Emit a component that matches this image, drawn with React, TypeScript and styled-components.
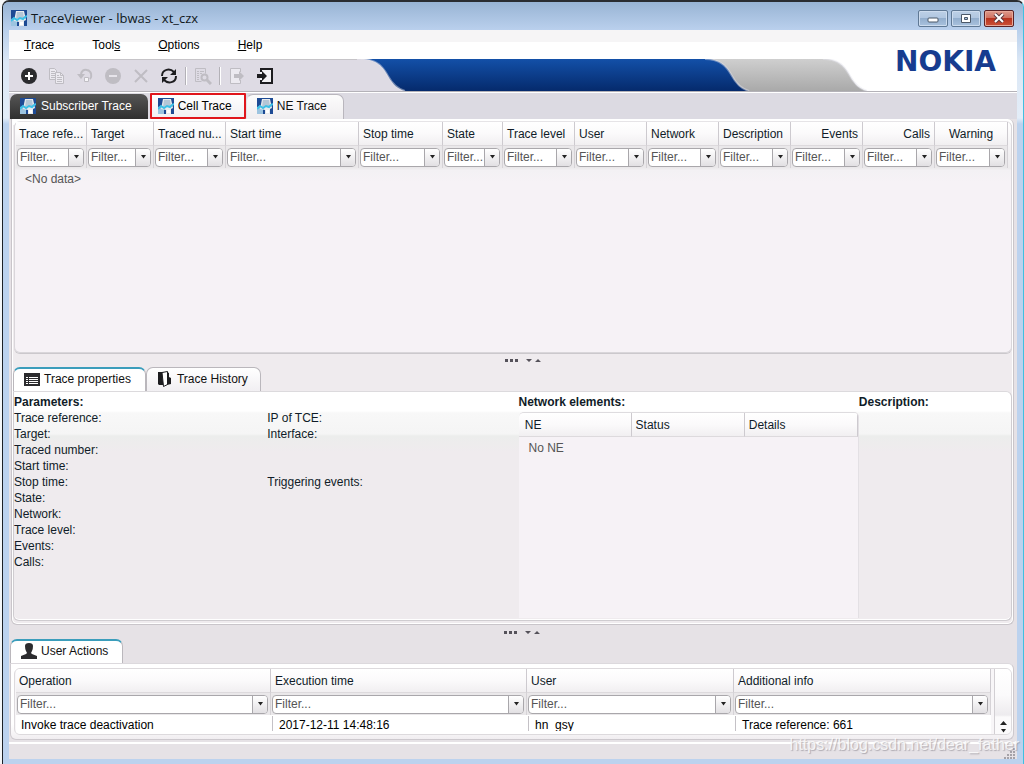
import React from "react";
import styled, { createGlobalStyle, css } from "styled-components";

const Global = createGlobalStyle`
  * { box-sizing: border-box; }
  html, body { margin: 0; padding: 0; }
  body { background: #f4f6f8; font: 12px/16px "Liberation Sans", Arial, sans-serif; color: #101c28; }
  button, input { font: inherit; color: inherit; margin: 0; }
  button { padding: 0; border: 0; background: none; }
  table { border-collapse: separate; border-spacing: 0; table-layout: fixed; width: 100%; }
  th, td { padding: 0; font-weight: normal; text-align: left; }
  svg { display: block; }
`;

const Desktop = styled.div`
  display: flex;
  min-height: 100vh;
  padding-left: 2px;
  background: #f4f6f8;
`;

const Window = styled.div`
  flex: 1;
  min-width: 0;
  position: relative;
  display: flex;
  flex-direction: column;
  padding: 0 6px 5px 6px;
  border-top: 2px solid #2a2d31;
  border-left: 1px solid #1c2026;
  border-right: 1px solid #3fc0e0;
  border-radius: 7px 7px 0 0;
  background: linear-gradient(#9cb7d6 0, #b9d0ec 28px, #dbe7f5 60px, #e3edf8 116px, #bcd2ee 122px, #bcd2ee 100%);
`;

const TitleBar = styled.header`
  height: 28px;
  display: flex;
  align-items: center;
  gap: 4px;
  margin: 0 -6px;
  padding: 4px 9px 0 8px;
  border-radius: 6px 6px 0 0;
  background: linear-gradient(#98b4d4, #bad0ed);
`;

const Title = styled.h1`
  flex: 1;
  margin: 0;
  font: 13px/16px "Open Sans", "Noto Sans", sans-serif;
  color: #101820;
`;

const CaptionButtons = styled.div`
  display: flex;
  gap: 3px;
`;

const CaptionButton = styled.button<{ $close?: boolean }>`
  width: 30px;
  height: 17px;
  display: grid;
  place-items: center;
  border: 1px solid ${(p) => (p.$close ? "#5a2226" : "#5f7894")};
  border-radius: 2px;
  box-shadow: inset 0 0 0 1px ${(p) => (p.$close ? "#e8a898" : "#cddcee")};
  background: ${(p) =>
    p.$close
      ? "linear-gradient(#dd9a8c 0, #d0705f 48%, #b8331f 50%, #cc5238 100%)"
      : "linear-gradient(#bdd0e6 0, #b0c6e0 48%, #93aecd 50%, #a9c2de 100%)"};
`;

const Client = styled.div`
  flex: 1;
  display: flex;
  flex-direction: column;
  position: relative;
  background: #e6e2e6;
`;

const MenuBar = styled.nav`
  height: 29px;
  display: flex;
  align-items: center;
  gap: 38px;
  padding-left: 15px;
  background: linear-gradient(#f6f5f6 0, #f6f5f6 12px, #fff 12px, #fff 100%);
  color: #000;
`;

const Logo = styled.div`
  position: absolute;
  top: 16px;
  right: 21px;
  font: bold 28px/32px "DejaVu Sans", sans-serif;
  color: #173c8f;
`;

const Band = styled.div`
  height: 34px;
  display: flex;
  border-bottom: 1px solid #fff;
  background: #fff;
  box-shadow: inset 0 -1px 0 #b4b2b8;
`;

const Toolbar = styled.div`
  width: 348px;
  height: 33px;
  display: flex;
  align-items: center;
  padding-left: 6px;
  border-top: 1px solid #c6c4c8;
  border-bottom: 1px solid #b4b2b8;
  background: #dedbe4;
`;

const ToolButton = styled.button`
  width: 28px;
  height: 28px;
  display: grid;
  place-items: center;
`;

const ToolRule = styled.i`
  width: 2px;
  height: 18px;
  margin: 0 2px;
  border-left: 1px solid #b3b1b7;
  border-right: 1px solid #fff;
`;

const BlueBand = styled.div`
  flex: 1;
  height: 32px;
  background: linear-gradient(#1350a8, #052a6c);
`;

const GreyBand = styled.div`
  width: 66px;
  height: 32px;
  background: linear-gradient(#cfcfcf, #a9a9a9);
`;

const BandEnd = styled.div`
  width: 146px;
`;

const TopTabs = styled.div`
  height: 26px;
  display: flex;
  align-items: flex-end;
  padding: 0 1px;
  gap: 2px;
  background: #dcdae2;
`;

const MainTab = styled.button<{ $look: "dark" | "marked" | "plain" }>`
  display: flex;
  align-items: center;
  gap: 5px;
  height: 25px;
  padding: 0 16px 2px 10px;
  color: #111;
  border-radius: 7px 7px 0 0;
  ${(p) =>
    p.$look === "dark" &&
    css`
      background: linear-gradient(#555, #303030);
      color: #fff;
    `}
  ${(p) =>
    p.$look === "marked" &&
    css`
      height: 26px;
      padding: 0 12px 0 6px;
      gap: 4px;
      border: 2px solid #e0161c;
      border-radius: 1px;
      background: linear-gradient(#fff, #f2f0f3);
      color: #000;
    `}
  ${(p) =>
    p.$look === "plain" &&
    css`
      margin-left: -2px;
      gap: 4px;
      border: 1px solid #b9b6bd;
      border-left-color: #e4e2e6;
      border-bottom: 0;
      background: linear-gradient(#fcfcfc, #efedf0);
    `}
`;

const OuterPanel = styled.main`
  flex: 1;
  display: flex;
  flex-direction: column;
  margin: 0 3px 0 2px;
  padding: 2px 1px 3px 1px;
  border: 1px solid #c9c5ca;
  border-top: 0;
  border-radius: 0 6px 6px 6px;
  background: linear-gradient(#fff 0, #fff 6px, #efebee 6px, #efebee 100%);
  box-shadow: inset 0 -1px 0 #fff, inset 1px 0 0 #fff, inset -1px 0 0 #fff;
`;

const TraceList = styled.section`
  flex: 1;
  min-height: 120px;
  margin-left: 1px;
  padding: 0 3px 0 1px;
  border: 1px solid #d9d6da;
  border-top-color: #e6e4e7;
  border-radius: 6px;
  background: linear-gradient(#fff 0, #f4f2f4 25px, #edebed 47px, #f3f1f4 48px, #f6f2f6 60px);
  box-shadow: 0 1px 0 #cbc8cc;
`;

const HeadCell = styled.th<{ $align?: string }>`
  height: 24px;
  padding: 0 4px;
  border-right: 1px solid #cdcacf;
  border-bottom: 1px solid #dddadd;
  background: linear-gradient(#fff 0, #fbfafb 50%, #f1eff1 100%);
  && { text-align: ${(p) => p.$align || "left"}; }
  white-space: nowrap;
  overflow: hidden;
  vertical-align: middle;
  &:first-child { padding-left: 3px; }
`;

const FilterCell = styled.td`
  height: 22px;
  padding: 0 2px 0 1px;
  border-right: 1px solid #d6d3d7;
  background: #eae8ea;
`;

const Combo = styled.div`
  display: flex;
  height: 19px;
  border: 1px solid #a9a7ab;
  border-radius: 4px;
  background: #fff;
  overflow: hidden;
`;

const ComboInput = styled.input`
  flex: 1;
  min-width: 0;
  width: 0;
  padding: 0 0 0 2px;
  border: 0;
  outline: 0;
  background: transparent;
  &::placeholder { color: #555; opacity: 1; }
`;

const ComboButton = styled.button`
  width: 15px;
  display: grid;
  place-items: center;
  border-left: 1px solid #a9a7ab;
  background: linear-gradient(#fff, #e2e0e3);
`;

const EmptyCell = styled.td<{ $indent: number }>`
  height: 21px;
  padding-left: ${(p) => p.$indent}px;
  color: #555;
`;

const Splitter = styled.div`
  height: 14px;
  display: flex;
  align-items: center;
  justify-content: center;
  padding-left: 20px;
`;

const SubTabs = styled.div`
  display: flex;
  align-items: flex-end;
`;

const SubTab = styled.button<{ $active?: boolean }>`
  display: flex;
  align-items: center;
  gap: 4px;
  height: 24px;
  padding: 0 12px 2px 10px;
  border: 1px solid #bab7bc;
  border-bottom: 0;
  border-radius: 7px 7px 0 0;
  background: linear-gradient(#fff, #f1eff2);
  color: #111;
  ${(p) =>
    p.$active &&
    css`
      padding-right: 14px;
      border-top: 2px solid #3b9dbb;
      background: #fff;
    `}
`;

const Properties = styled.section`
  display: grid;
  grid-template-columns: 253fr 251fr 340fr 152fr;
  min-height: 230px;
  border: 1px solid #cfccd0;
  border-top-color: #dcdadd;
  border-radius: 0 6px 6px 6px;
  background: linear-gradient(#fff 0, #fff 19px, #f8f8f8 21px, #f5f5f5 42px, #ecedec 44px, #efebee 60px);
  box-shadow: inset 0 -1px 0 #fff;
`;

const Column = styled.div<{ $top?: number }>`
  display: flex;
  flex-direction: column;
  padding-top: ${(p) => p.$top || 2}px;
`;

const Caption = styled.h2`
  margin: 0;
  font: bold 12px/16px "Liberation Sans", Arial, sans-serif;
`;

const Field = styled.div<{ $gap?: boolean }>`
  height: 16px;
  margin-top: ${(p) => (p.$gap ? 32 : 0)}px;
`;

const Elements = styled.div`
  flex: 1;
  margin: 2px 0 2px 0;
  border-right: 1px solid #e3e0e4;
  border-top: 1px solid #dedcdf;
  border-radius: 5px 5px 0 0;
  background: #f6f2f6;
  overflow: hidden;
`;

const Bottom = styled.section`
  padding: 0 3px 0 1px;
`;

const BottomPanel = styled.div`
  height: 77px;
  padding: 4px 1px 4px 3px;
  border: 1px solid #cdc9ce;
  border-top-color: #dcd9dd;
  border-radius: 0 6px 6px 6px;
  background: linear-gradient(#fff 0, #fff 60px, #f1eef1 100%);
`;

const ScrollArea = styled.div`
  display: flex;
  gap: 3px;
  height: 67px;
  border: 1px solid #dddadd;
  border-radius: 6px;
  overflow: hidden;
  background: #f8f6f8;
`;

const ScrollTable = styled.div`
  flex: 1;
  padding-left: 1px;
`;

const DataCell = styled.td`
  background: #fff;
  color: #000;
  padding: 1px 0 4px 1px;
  &:first-child > div { border-left-color: transparent; padding-left: 3px; }
`;

const Clip = styled.div`
  height: 15px;
  padding-left: 6px;
  border-left: 1px solid #c4c1c6;
  overflow: hidden;
  white-space: nowrap;
  line-height: 19px;
`;

const ScrollBar = styled.div`
  width: 17px;
  display: flex;
  flex-direction: column;
  border-left: 1px solid #d2cfd3;
  background: linear-gradient(#fff 0, #fbfafb 26px, #edebee 46px, #fbfafb 48px);
`;

const ScrollButton = styled.button<{ $top: number }>`
  height: 8px;
  margin-top: ${(p) => p.$top}px;
  display: grid;
  place-items: center;
`;

const StatusBar = styled.footer`
  height: 17px;
  margin-top: 2px;
  display: flex;
  align-items: flex-end;
  justify-content: flex-end;
  border-top: 2px solid #fff;
  background: #e6e2e6;
`;

const Watermark = styled.div`
  position: absolute;
  right: 4px;
  bottom: 10px;
  font: 16px/18px "Liberation Sans", Arial, sans-serif;
  color: rgba(255, 255, 255, 0.8);
  text-shadow: 1px 1px 1px rgba(120, 116, 125, 0.5);
  pointer-events: none;
`;

const AppIcon = () => (
  <svg width="16" height="16" viewBox="0 0 16 16" aria-hidden="true">
    <rect width="16" height="16" fill="#1d4a94" />
    <path d="M0 9 4 8 6 11v5H0Z" fill="#9cc4e0" />
    <path d="M5 1 13 1 15 10 13 11v5H8v-4L3 11Z" fill="#e8ebee" />
    <path d="M6 2h6l1 6-8 1Z" fill="#b4c6d6" />
    <path d="M0 11l3-3 3 2 3-2 3 1 2-2 2-1" fill="none" stroke="#3cc0e6" strokeWidth="2" />
    <path d="M9 12h3v3H9Z" fill="#fff" />
  </svg>
);

const Arrow = ({ up }: { up?: boolean }) => (
  <svg width="7" height="4" viewBox="0 0 7 4" aria-hidden="true">
    <path d={up ? "M0 4 3.5 0 7 4Z" : "M1 0h5L3.5 3.5Z"} fill="#222" />
  </svg>
);

const Handle = () => (
  <svg width="38" height="5" viewBox="0 0 38 5" aria-hidden="true">
    <path d="M1 1h3v3H1zM6 1h3v3H6zM11 1h3v3h-3zM22 1h6l-3 3zM31 4h6l-3-3z" fill="#55525a" />
  </svg>
);

const Curve = ({ from, to, id }: { from: string[]; to: string[]; id: string }) => (
  <svg width="52" height="32" viewBox="0 0 52 32" aria-hidden="true">
    <defs>
      <linearGradient id={id + "a"} x2="0" y2="1">
        <stop stopColor={from[0]} />
        <stop offset="1" stopColor={from[1]} />
      </linearGradient>
      <linearGradient id={id + "b"} x2="0" y2="1">
        <stop stopColor={to[0]} />
        <stop offset="1" stopColor={to[1]} />
      </linearGradient>
    </defs>
    <rect width="52" height="32" fill={`url(#${id}b)`} />
    <path d="M0 0H4C20 0 26 8 31 17 36 26 41 30 48 32H0Z" fill={`url(#${id}a)`} />
    <path d="M4 0C20 0 26 8 31 17 36 26 41 30 48 32" fill="none" stroke="#e3e3ea" strokeOpacity=".45" strokeWidth="2" />
  </svg>
);

const Filter = ({ label }: { label: string }) => (
  <Combo>
    <ComboInput placeholder="Filter..." aria-label={`Filter ${label}`} />
    <ComboButton aria-label={`${label} filter choices`}>
      <Arrow />
    </ComboButton>
  </Combo>
);

type Col = { name: string; width: number; align?: string };

const Grid = ({ cols, children }: { cols: Col[]; children?: React.ReactNode }) => {
  const total = cols.reduce((sum, c) => sum + c.width, 0);
  return (
    <table>
      <colgroup>
        {cols.map((c) => (
          <col key={c.name} style={{ width: `${(c.width / total) * 100}%` }} />
        ))}
      </colgroup>
      <thead>
        <tr>
          {cols.map((c) => (
            <HeadCell key={c.name} $align={c.align}>{c.name}</HeadCell>
          ))}
        </tr>
      </thead>
      <tbody>
        <tr>
          {cols.map((c) => (
            <FilterCell key={c.name}><Filter label={c.name} /></FilterCell>
          ))}
        </tr>
        {children}
      </tbody>
    </table>
  );
};

const traceCols: Col[] = [
  { name: "Trace refe...", width: 71 },
  { name: "Target", width: 67 },
  { name: "Traced nu...", width: 72 },
  { name: "Start time", width: 133 },
  { name: "Stop time", width: 84 },
  { name: "State", width: 60 },
  { name: "Trace level", width: 72 },
  { name: "User", width: 72 },
  { name: "Network", width: 72 },
  { name: "Description", width: 72 },
  { name: "Events", width: 72, align: "right" },
  { name: "Calls", width: 72, align: "right" },
  { name: "Warning", width: 73, align: "center" },
];

const actionCols: Col[] = [
  { name: "Operation", width: 255 },
  { name: "Execution time", width: 256 },
  { name: "User", width: 207 },
  { name: "Additional info", width: 257 },
];

const leftFields = ["Trace reference:", "Target:", "Traced number:", "Start time:", "Stop time:", "State:", "Network:", "Trace level:", "Events:", "Calls:"];

const dim = "#bfbdc3";

const icons = {
  add: (
    <svg width="18" height="18" viewBox="0 0 18 18">
      <circle cx="9" cy="9" r="8" fill="#2b2b2e" />
      <path d="M9 5v8M5 9h8" stroke="#fff" strokeWidth="2" />
    </svg>
  ),
  copy: (
    <svg width="18" height="18" viewBox="0 0 18 18" fill="#eceaf0" stroke={dim}>
      <path d="M1.500 1.500h5l2 2v9h-7z" />
      <path d="M3 4.500h4M3 6.500h4M3 8.500h4M3 10.500h4" />
      <path d="M7.500 5.500h5l3 3v8h-8z" />
      <path d="M12.500 5.500v3h3M9 8.500h2M9 10.500h5M9 12.500h5M9 14.500h5" fill="none" />
    </svg>
  ),
  undo: (
    <svg width="18" height="18" viewBox="0 0 18 18" fill="none" stroke={dim} strokeWidth="2">
      <path d="M5 8C5 4 8 2 11 3c5 1 5 7 3 9" />
      <path d="M1 7h8l-4 5z" fill={dim} stroke="none" />
      <path d="M8.500 10.500h4v4h-4z" strokeWidth="1" fill="#f6f5f8" />
    </svg>
  ),
  remove: (
    <svg width="18" height="18" viewBox="0 0 18 18">
      <circle cx="9" cy="9" r="8" fill={dim} />
      <path d="M5 9h8" stroke="#e6e4ea" strokeWidth="2" />
    </svg>
  ),
  close: (
    <svg width="18" height="18" viewBox="0 0 18 18" stroke={dim} strokeWidth="2">
      <path d="M3 3l12 12M15 3 3 15" />
    </svg>
  ),
  refresh: (
    <svg width="18" height="18" viewBox="0 0 18 18" fill="none" stroke="#1d1d20" strokeWidth="2">
      <path d="M2 9c0-7 8-8 12-4M16 9c0 7-8 8-12 4" />
      <path d="M16 2v6h-6zM2 16v-6h6z" fill="#1d1d20" stroke="none" />
    </svg>
  ),
  find: (
    <svg width="18" height="18" viewBox="0 0 18 18" fill="none" stroke={dim}>
      <path d="M1.500 1.500h10v5M1.500 1.500v13h6M3 4.500h2M6 4.500h4M3 6.500h2M6 6.500h2M3 8.500h2M3 10.500h2M3 12.500h2" />
      <circle cx="10.500" cy="10.500" r="3" strokeWidth="2" />
      <path d="M13 13l4 4" strokeWidth="3" />
    </svg>
  ),
  exportTo: (
    <svg width="18" height="18" viewBox="0 0 18 18">
      <path d="M12.500 5V1.500h-10v15h10V13" fill="#eceaf0" stroke={dim} />
      <path d="M6 7h5V4l5 5-5 5v-3H6z" fill={dim} />
    </svg>
  ),
  importFrom: (
    <svg width="18" height="18" viewBox="0 0 18 18">
      <path d="M4 2h11.500v14H4" fill="#f3f2f5" />
      <path d="M5 5V2h11v14H5v-3" fill="none" stroke="#1d1d20" strokeWidth="2" />
      <path d="M1 7h5V4l5 5-5 5v-3H1z" fill="#1d1d20" />
    </svg>
  ),
};

export default function App() {
  return (
    <Desktop>
      <Global />
      <Window>
        <TitleBar>
          <AppIcon />
          <Title>TraceViewer - lbwas - xt_czx</Title>
          <CaptionButtons>
            <CaptionButton aria-label="Minimize">
              <svg width="12" height="9" viewBox="0 0 12 9">
                <rect x="1" y="4" width="10" height="4" rx="1" fill="#fff" stroke="#4b5868" />
              </svg>
            </CaptionButton>
            <CaptionButton aria-label="Maximize">
              <svg width="12" height="9" viewBox="0 0 12 9">
                <path d="M1.500.5h9v8h-9z" fill="#fff" stroke="#4b5868" />
                <path d="M4.500 3.500h3v2h-3z" fill="#a9c2de" stroke="#4b5868" />
              </svg>
            </CaptionButton>
            <CaptionButton $close aria-label="Close">
              <svg width="12" height="10" viewBox="0 0 12 10">
                <path d="M2 1l8 8M10 1 2 9" stroke="#5b3a40" strokeWidth="4" />
                <path d="M2 1l8 8M10 1 2 9" stroke="#fff" strokeWidth="2" />
              </svg>
            </CaptionButton>
          </CaptionButtons>
        </TitleBar>

        <Client>
          <MenuBar>
            <button><u>T</u>race</button>
            <button>Tool<u>s</u></button>
            <button><u>O</u>ptions</button>
            <button><u>H</u>elp</button>
          </MenuBar>
          <Logo>NOKIA</Logo>
          <Band>
            <Toolbar role="toolbar">
              <ToolButton aria-label="Add">{icons.add}</ToolButton>
              <ToolButton aria-label="Copy">{icons.copy}</ToolButton>
              <ToolButton aria-label="Reactivate">{icons.undo}</ToolButton>
              <ToolButton aria-label="Deactivate">{icons.remove}</ToolButton>
              <ToolButton aria-label="Delete">{icons.close}</ToolButton>
              <ToolButton aria-label="Refresh">{icons.refresh}</ToolButton>
              <ToolRule />
              <ToolButton aria-label="View trace">{icons.find}</ToolButton>
              <ToolRule />
              <ToolButton aria-label="Export">{icons.exportTo}</ToolButton>
              <ToolButton aria-label="Import">{icons.importFrom}</ToolButton>
            </Toolbar>
            <Curve id="c1" from={["#dedbe4", "#dedbe4"]} to={["#1350a8", "#052a6c"]} />
            <BlueBand />
            <Curve id="c2" from={["#1350a8", "#052a6c"]} to={["#cfcfcf", "#a9a9a9"]} />
            <GreyBand />
            <Curve id="c3" from={["#cfcfcf", "#a9a9a9"]} to={["#ffffff", "#ffffff"]} />
            <BandEnd />
          </Band>

          <TopTabs role="tablist">
            <MainTab role="tab" $look="dark"><AppIcon />Subscriber Trace</MainTab>
            <MainTab role="tab" $look="marked"><AppIcon />Cell Trace</MainTab>
            <MainTab role="tab" $look="plain"><AppIcon />NE Trace</MainTab>
          </TopTabs>

          <OuterPanel>
            <TraceList>
              <Grid cols={traceCols}>
                <tr><EmptyCell colSpan={13} $indent={9}>&lt;No data&gt;</EmptyCell></tr>
              </Grid>
            </TraceList>
            <Splitter><Handle /></Splitter>
            <SubTabs role="tablist">
              <SubTab role="tab" $active>
                <svg width="16" height="13" viewBox="0 0 16 13">
                  <path d="M0 0h16v13H0z" fill="#2b2b2e" />
                  <path d="M2 4.500h2M5 4.500h9M2 6.500h2M5 6.500h9M2 8.500h2M5 8.500h9M2 10.500h2M5 10.500h9" stroke="#fff" />
                </svg>
                Trace properties
              </SubTab>
              <SubTab role="tab">
                <svg width="16" height="16" viewBox="0 0 16 16">
                  <path d="M1 1h6v13H2L1 13Z" fill="#1d1d20" />
                  <path d="M5 1.500 10.500.500v13L6.500 15.500Z" fill="#fff" stroke="#1d1d20" />
                  <path d="M10 1l2 1v4l2 1v6l-4 1Z" fill="#1d1d20" />
                </svg>
                Trace History
              </SubTab>
            </SubTabs>
            <Properties>
              <Column>
                <Caption>Parameters:</Caption>
                {leftFields.map((f) => <Field key={f}>{f}</Field>)}
              </Column>
              <Column $top={18}>
                <Field>IP of TCE:</Field>
                <Field>Interface:</Field>
                <Field $gap>Triggering events:</Field>
              </Column>
              <Column>
                <Caption>Network elements:</Caption>
                <Elements>
                  <table>
                    <thead>
                      <tr>
                        <HeadCell>&nbsp;NE</HeadCell>
                        <HeadCell>Status</HeadCell>
                        <HeadCell>Details</HeadCell>
                      </tr>
                    </thead>
                    <tbody>
                      <tr><EmptyCell colSpan={3} $indent={10}>No NE</EmptyCell></tr>
                    </tbody>
                  </table>
                </Elements>
              </Column>
              <Column><Caption>Description:</Caption></Column>
            </Properties>
          </OuterPanel>

          <Bottom>
            <Splitter><Handle /></Splitter>
            <SubTabs role="tablist">
              <SubTab role="tab" $active>
                <svg width="16" height="16" viewBox="0 0 16 16">
                  <path d="M4 3Q4 0 8 0t4 3-1 5l-1 2 1 1 5 2v3H0v-3l5-2 1-1-1-2Q4 6 4 3Z" fill="#2b2b2e" />
                </svg>
                User Actions
              </SubTab>
            </SubTabs>
            <BottomPanel>
              <ScrollArea>
                <ScrollTable>
                  <Grid cols={actionCols}>
                    <tr>
                      {["Invoke trace deactivation", "2017-12-11 14:48:16", "hn_gsy", "Trace reference: 661"].map((t) => (
                        <DataCell key={t}><Clip>{t}</Clip></DataCell>
                      ))}
                    </tr>
                  </Grid>
                </ScrollTable>
                <ScrollBar>
                  <ScrollButton $top={51} aria-label="Scroll up"><Arrow up /></ScrollButton>
                  <ScrollButton $top={2} aria-label="Scroll down"><Arrow /></ScrollButton>
                </ScrollBar>
              </ScrollArea>
            </BottomPanel>
          </Bottom>
          <StatusBar>
            <svg width="13" height="12" viewBox="0 0 13 12" aria-hidden="true">
              <path d="M9 1h2v2H9zM6 4h2v2H6zM9 4h2v2H9zM3 7h2v2H3zM6 7h2v2H6zM9 7h2v2H9zM0 10h2v2H0zM3 10h2v2H3zM6 10h2v2H6zM9 10h2v2H9z" fill="#a5a2a8" />
            </svg>
          </StatusBar>
        </Client>
        <Watermark>https://blog.csdn.net/dear_father</Watermark>
      </Window>
    </Desktop>
  );
}
